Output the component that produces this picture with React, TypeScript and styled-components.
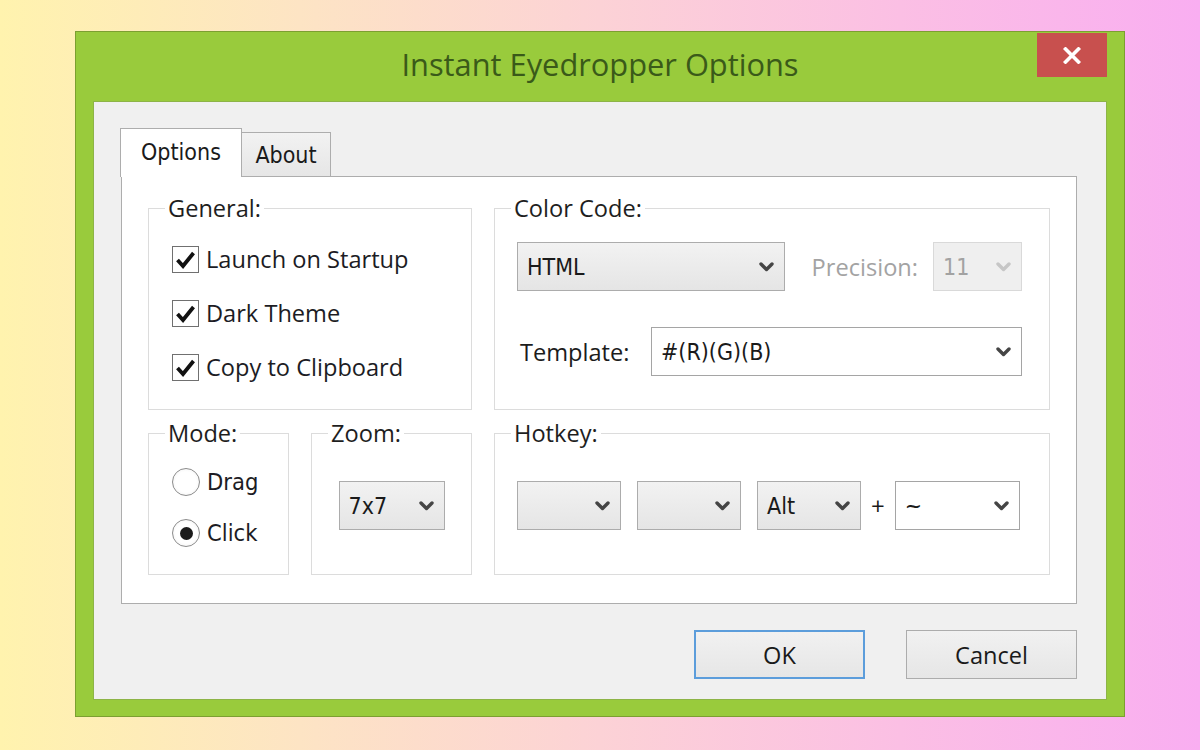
import React from "react";
import styled, { createGlobalStyle, css } from "styled-components";

const Global = createGlobalStyle`
  html, body { margin: 0; padding: 0; }
  body { font-family: "Open Sans", "Noto Sans", sans-serif; }
`;

const UI = `"Open Sans", "Noto Sans", sans-serif`;
const DLG = `"DejaVu Sans Condensed", "DejaVu Sans", sans-serif`;
const UI_SIZE = "23.6px";

const Page = styled.div`
  width: 1200px;
  height: 750px;
  box-sizing: border-box;
  padding-top: 31px;
  display: flex;
  justify-content: center;
  align-items: flex-start;
  background: linear-gradient(90deg, #fff3ae 0%, #fde4c4 25%, #fcd2d6 50%, #fbbfe4 75%, #f9aef1 100%);
  overflow: hidden;
`;

const Window = styled.div`
  width: 1050px;
  height: 686px;
  box-sizing: border-box;
  background: #99cb3c;
  border: 1px solid #7c9f31;
  padding: 0 17px 16px 17px;
  display: flex;
  flex-direction: column;
`;

const TitleBar = styled.div`
  height: 69px;
  flex: none;
  display: grid;
  grid-template-columns: 1fr auto 1fr;
  align-items: center;
`;

const Title = styled.div`
  grid-column: 2;
  font-family: ${UI};
  font-size: 30.8px;
  line-height: 1;
  color: #3a5a19;
  margin-top: -4px;
`;

const CloseButton = styled.div`
  grid-column: 3;
  justify-self: end;
  align-self: start;
  margin-top: 1px;
  width: 70px;
  height: 44px;
  background: #c8504e;
  display: flex;
  align-items: center;
  justify-content: center;
`;

const Client = styled.div`
  flex: 1;
  background: #f0f0f0;
  border: 1px solid #8db447;
  padding: 26px 29px 0 26px;
  display: flex;
  flex-direction: column;
`;

const TabStrip = styled.div`
  display: flex;
  align-items: flex-end;
  margin-bottom: -1px;
  position: relative;
  z-index: 1;
`;

const Tab = styled.div<{ $active?: boolean; $w: number }>`
  width: ${(p) => p.$w}px;
  box-sizing: border-box;
  display: flex;
  align-items: center;
  justify-content: center;
  font-family: ${DLG};
  font-size: 23px;
  color: #1a1a1a;
  border: 1px solid #adadad;
  ${(p) =>
    p.$active
      ? css`
          height: 49px;
          border-bottom: none;
          background: #ffffff;
          padding-bottom: 2px;
        `
      : css`
          height: 45px;
          margin-left: -1px;
          background: linear-gradient(#f2f2f2, #e6e6e6);
          padding-top: 1px;
        `}
`;

const Panel = styled.div`
  margin-left: 1px;
  width: 956px;
  height: 428px;
  box-sizing: border-box;
  background: #ffffff;
  border: 1px solid #adadad;
  padding: 19px 0 0 26px;
  display: grid;
  grid-template-columns: 324px 556px;
  grid-template-rows: 214px 154px;
  column-gap: 22px;
  row-gap: 11px;
`;

const SubGrid = styled.div`
  display: grid;
  grid-template-columns: 141px 161px;
  column-gap: 22px;
`;

const Group = styled.fieldset`
  margin: 0;
  padding: 0;
  min-width: 0;
  box-sizing: border-box;
  border: 1px solid #dcdcdc;
  height: 100%;
`;

const Legend = styled.legend`
  margin-left: 16px;
  padding: 0 3px;
  font-family: ${UI};
  font-size: ${UI_SIZE};
  line-height: 24px;
  color: #1e1e1e;
`;

const CheckList = styled.div`
  display: flex;
  flex-direction: column;
  gap: 24px;
  padding: 24px 0 0 23px;
`;

const OptionRow = styled.label<{ $dlg?: boolean }>`
  height: 30px;
  display: flex;
  align-items: center;
  gap: 7px;
  font-family: ${(p) => (p.$dlg ? DLG : UI)};
  font-size: ${(p) => (p.$dlg ? "23.5px" : UI_SIZE)};
  color: #1c1c24;
`;

const Box = styled.span`
  width: 27px;
  height: 27px;
  box-sizing: border-box;
  border: 1px solid #707070;
  background: #ffffff;
  display: flex;
  align-items: center;
  justify-content: center;
  flex: none;
`;

const Radio = styled.span<{ $on?: boolean }>`
  width: 28px;
  height: 28px;
  box-sizing: border-box;
  border-radius: 50%;
  border: 1.5px solid #8c8c8c;
  background: radial-gradient(circle, #ffffff 55%, #ececec 100%);
  display: flex;
  align-items: center;
  justify-content: center;
  flex: none;
  &::after {
    content: "";
    width: 13px;
    height: 13px;
    border-radius: 50%;
    background: #1a1a1a;
    display: ${(p) => (p.$on ? "block" : "none")};
  }
`;

const RadioList = styled.div`
  display: flex;
  flex-direction: column;
  gap: 21px;
  padding: 22px 0 0 23px;
`;

const ColorBody = styled.div`
  display: flex;
  flex-direction: column;
  gap: 36px;
  padding: 22px 27px 0 22px;
`;

const FieldRow = styled.div`
  display: flex;
  align-items: center;
`;

const FieldLabel = styled.span<{ $disabled?: boolean; $indent?: number; $gapAfter?: number }>`
  font-family: ${UI};
  font-size: ${UI_SIZE};
  color: ${(p) => (p.$disabled ? "#a3a3a3" : "#1c1c1c")};
  padding-left: ${(p) => p.$indent ?? 0}px;
  margin-right: ${(p) => p.$gapAfter ?? 0}px;
`;

const Spacer = styled.span`
  flex: 1;
`;

type Variant = "button" | "edit" | "disabled";

const ComboBox = styled.div<{ $w: number; $v: Variant }>`
  width: ${(p) => p.$w}px;
  height: 49px;
  box-sizing: border-box;
  flex: none;
  display: flex;
  align-items: center;
  padding: 0 10px 0 9px;
  font-family: ${DLG};
  font-size: 23px;
  color: #1a1a1a;
  ${(p) =>
    p.$v === "button"
      ? css`
          border: 1px solid #acacac;
          background: linear-gradient(#f2f2f2, #e5e5e5);
        `
      : p.$v === "edit"
      ? css`
          border: 1px solid #a5a5a5;
          background: #ffffff;
        `
      : css`
          border: 1px solid #d9d9d9;
          background: #efefef;
          color: #a2a2a2;
        `}
`;

const ComboText = styled.span`
  flex: 1;
  white-space: nowrap;
`;

const CenterBody = styled.div`
  display: flex;
  justify-content: center;
  padding-top: 36px;
`;

const HotkeyBody = styled.div`
  display: flex;
  align-items: center;
  gap: 16px;
  padding: 36px 0 0 22px;
`;

const Plus = styled.span`
  margin: 0 -6px;
  font-family: ${UI};
  font-size: 24px;
  color: #1a1a1a;
`;

const ButtonRow = styled.div`
  display: flex;
  justify-content: flex-end;
  gap: 41px;
  margin-top: 26px;
`;

const Button = styled.div<{ $default?: boolean }>`
  width: 171px;
  height: 49px;
  box-sizing: border-box;
  display: flex;
  align-items: center;
  justify-content: center;
  font-family: ${UI};
  font-size: ${UI_SIZE};
  color: #1a1a1a;
  background: linear-gradient(#f1f1f1, #e6e6e6);
  border: ${(p) => (p.$default ? "2px solid #5c9ddb" : "1px solid #acacac")};
`;

const Chevron = ({ disabled }: { disabled?: boolean }) => (
  <svg width="15" height="10" viewBox="0 0 15 10" style={{ flex: "none" }}>
    <path
      d="M2 2 L7.5 7.5 L13 2"
      fill="none"
      stroke={disabled ? "#c6c6c6" : "#454545"}
      strokeWidth="3.4"
      strokeLinecap="round"
      strokeLinejoin="round"
    />
  </svg>
);

const Check = () => (
  <svg width="21" height="19" viewBox="0 0 21 19">
    <path d="M2.5 10 L8 16 L18.5 3" fill="none" stroke="#111" strokeWidth="3.8" strokeLinejoin="miter" />
  </svg>
);

const CloseX = () => (
  <svg width="18" height="17" viewBox="0 0 18 17">
    <path d="M2.5 2 L15.5 15 M15.5 2 L2.5 15" stroke="#ffffff" strokeWidth="3.6" strokeLinecap="square" />
  </svg>
);

const Combo = ({ w, v, text }: { w: number; v: Variant; text?: string }) => (
  <ComboBox $w={w} $v={v}>
    <ComboText>{text ?? ""}</ComboText>
    <Chevron disabled={v === "disabled"} />
  </ComboBox>
);

export default function App() {
  return (
    <>
      <Global />
      <Page>
        <Window>
          <TitleBar>
            <Title>Instant Eyedropper Options</Title>
            <CloseButton>
              <CloseX />
            </CloseButton>
          </TitleBar>
          <Client>
            <TabStrip>
              <Tab $active $w={122}>
                Options
              </Tab>
              <Tab $w={90}>About</Tab>
            </TabStrip>
            <Panel>
              <Group>
                <Legend>General:</Legend>
                <CheckList>
                  {["Launch on Startup", "Dark Theme", "Copy to Clipboard"].map((t) => (
                    <OptionRow key={t}>
                      <Box>
                        <Check />
                      </Box>
                      {t}
                    </OptionRow>
                  ))}
                </CheckList>
              </Group>
              <Group>
                <Legend>Color Code:</Legend>
                <ColorBody>
                  <FieldRow>
                    <Combo w={268} v="button" text="HTML" />
                    <Spacer />
                    <FieldLabel $disabled $gapAfter={15}>
                      Precision:
                    </FieldLabel>
                    <Combo w={89} v="disabled" text="11" />
                  </FieldRow>
                  <FieldRow>
                    <FieldLabel $indent={3}>Template:</FieldLabel>
                    <Spacer />
                    <Combo w={371} v="edit" text="#(R)(G)(B)" />
                  </FieldRow>
                </ColorBody>
              </Group>
              <SubGrid>
                <Group>
                  <Legend>Mode:</Legend>
                  <RadioList>
                    <OptionRow $dlg>
                      <Radio />
                      Drag
                    </OptionRow>
                    <OptionRow $dlg>
                      <Radio $on />
                      Click
                    </OptionRow>
                  </RadioList>
                </Group>
                <Group>
                  <Legend>Zoom:</Legend>
                  <CenterBody>
                    <Combo w={106} v="button" text="7x7" />
                  </CenterBody>
                </Group>
              </SubGrid>
              <Group>
                <Legend>Hotkey:</Legend>
                <HotkeyBody>
                  <Combo w={104} v="button" />
                  <Combo w={104} v="button" />
                  <Combo w={104} v="button" text="Alt" />
                  <Plus>+</Plus>
                  <Combo w={125} v="edit" text="~" />
                </HotkeyBody>
              </Group>
            </Panel>
            <ButtonRow>
              <Button $default>OK</Button>
              <Button>Cancel</Button>
            </ButtonRow>
          </Client>
        </Window>
      </Page>
    </>
  );
}
